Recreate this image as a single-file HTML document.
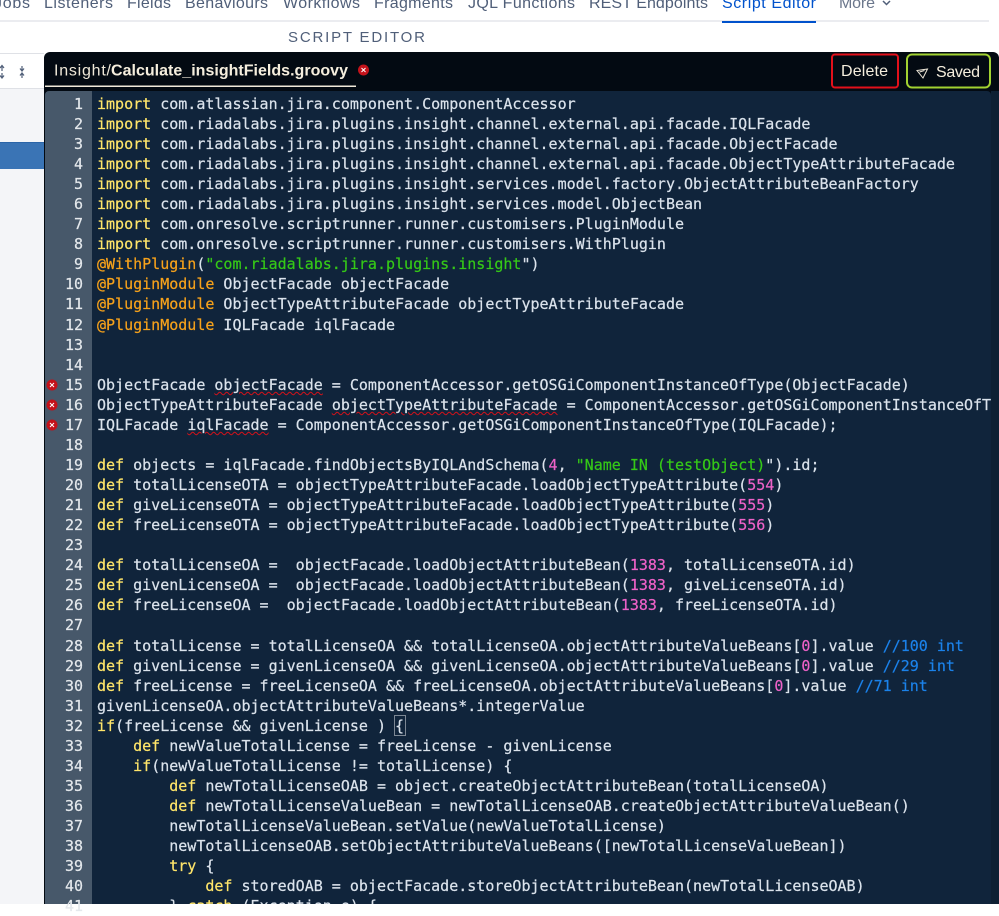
<!DOCTYPE html>
<html><head><meta charset="utf-8"><style>
html,body{margin:0;padding:0;background:#fff}
body{width:999px;height:904px;position:relative;overflow:hidden}
.abs{position:absolute}
#panel{left:44px;top:52px;width:955px;height:852px;background:#030a12;border-radius:6px 6px 0 0}
#code{left:45px;top:91px;width:946px;height:813px;background:#10243b;border-radius:4px 4px 0 0;overflow:hidden}
#strip{left:991px;top:91px;width:8px;height:813px;background:#0e2033}
#gut{left:45px;top:91px;width:47px;height:813px;background:#47586a;border-radius:4px 0 0 0}
#nums{left:45px;top:94.200px;width:38px;text-align:right}
#lines{left:97px;top:94.200px;width:894px;overflow:hidden;height:810px}
#nums div,#lines div{height:20.05px;line-height:20.05px;white-space:pre;font:15px/20.05px "DejaVu Sans Mono","Liberation Mono",monospace;-webkit-text-stroke:.2px currentColor}
#nums div:nth-child(n+8):nth-child(-n+11),#lines div:nth-child(n+8):nth-child(-n+11){position:relative;top:-1px}
#nums div:nth-child(28),#lines div:nth-child(28){position:relative;top:1px}
#nums div{color:#e4e8ec}
#lines div{color:#dbe3ec}
.k{color:#ffe56a}.a{color:#f7a21b}.s{color:#35c917}.n{color:#ee62c8}.c{color:#1b82ea}
.e{text-decoration:underline wavy #d4121a 1px;text-underline-offset:1px}
svg text{font-family:"Liberation Sans",sans-serif}
</style></head><body>
<div class="abs" style="left:0;top:88px;width:44px;height:816px;background:#f4f5f8"></div>
<div class="abs" style="left:0;top:53px;width:44px;height:34px;background:#fff;border-top:1px solid #dfe1e6;border-bottom:1px solid #dfe1e6"></div>
<div class="abs" style="left:0;top:142px;width:44px;height:26px;background:#3a74b5;border-top:1px solid #2b65a8"></div>
<div class="abs" style="left:0;top:20px;width:989px;height:2px;background:#ebecf0"></div>
<div class="abs" style="left:722px;top:21px;width:94px;height:2px;background:#0052cc"></div>
<svg class="abs" style="left:0;top:0" width="999" height="50" xmlns="http://www.w3.org/2000/svg">
<g font-size="16" fill="#505f79">
<text x="-6" y="8" textLength="36" lengthAdjust="spacing">Jobs</text>
<text x="44" y="8" textLength="69" lengthAdjust="spacing">Listeners</text>
<text x="127" y="8" textLength="44" lengthAdjust="spacing">Fields</text>
<text x="185" y="8" textLength="83" lengthAdjust="spacing">Behaviours</text>
<text x="283" y="8" textLength="77" lengthAdjust="spacing">Workflows</text>
<text x="374" y="8" textLength="79" lengthAdjust="spacing">Fragments</text>
<text x="468" y="8" textLength="107" lengthAdjust="spacing">JQL Functions</text>
<text x="589" y="8" textLength="119" lengthAdjust="spacing">REST Endpoints</text>
<text x="722" y="8" textLength="94" lengthAdjust="spacing" fill="#0052cc">Script Editor</text>
<text x="839" y="8" textLength="36" lengthAdjust="spacing" fill="#6b778c">More</text>
</g>
<path d="M883 1l3.500 3.500L890 1" fill="none" stroke="#505f79" stroke-width="1.500"/>
<text x="288" y="42" font-size="15" fill="#505f79" textLength="137" lengthAdjust="spacing">SCRIPT EDITOR</text>
</svg>
<svg class="abs" style="left:0;top:60px" width="30" height="24" xmlns="http://www.w3.org/2000/svg">
<g fill="none" stroke="#505f79" stroke-width="1.200">
<path d="M2 6v5M0 8l2-2.500 2 2.500M2 13v5M0 15.500l2 2.500 2-2.500"/>
<path d="M22 6v5M20 8.500l2 2.500 2-2.500M22 13v5M20 15.500l2-2.500 2 2.500"/>
</g></svg>
<div class="abs" id="panel"></div>
<div class="abs" id="code"></div>
<div class="abs" id="strip"></div>
<div class="abs" id="gut"></div>
<svg class="abs" style="left:44px;top:52px" width="955" height="40" xmlns="http://www.w3.org/2000/svg">
<text x="10" y="23.500" font-size="16" fill="#efe8d8" textLength="57" lengthAdjust="spacing">Insight/</text>
<text x="67" y="23.500" font-size="16" font-weight="700" fill="#f5eedd" textLength="237" lengthAdjust="spacing">Calculate_insightFields.groovy</text>
<rect x="1" y="33.500" width="311" height="1.500" fill="#f0e9da"/>
<circle cx="319.500" cy="18" r="5.500" fill="#c4121a"/>
<path d="M317.500 16l4 4M321.500 16l-4 4" stroke="#fff" stroke-width="1"/>
<rect x="788" y="2.500" width="66" height="33" rx="3" fill="none" stroke="#e3101a" stroke-width="2"/>
<text x="797" y="24" font-size="16" fill="#f5eedd" textLength="47" lengthAdjust="spacing">Delete</text>
<rect x="863" y="2.500" width="83" height="33" rx="5" fill="none" stroke="#a2d231" stroke-width="2"/>
<path d="M873 18.500l10.500-1.500-4.500 9zM875.500 20l5-1.500" fill="none" stroke="#f0e9da" stroke-width="1"/>
<text x="892" y="25" font-size="16" fill="#f5eedd" textLength="44" lengthAdjust="spacing">Saved</text>
</svg>
<div class="abs" id="nums"><div>1</div><div>2</div><div>3</div><div>4</div><div>5</div><div>6</div><div>7</div><div>8</div><div>9</div><div>10</div><div>11</div><div>12</div><div>13</div><div>14</div><div>15</div><div>16</div><div>17</div><div>18</div><div>19</div><div>20</div><div>21</div><div>22</div><div>23</div><div>24</div><div>25</div><div>26</div><div>27</div><div>28</div><div>29</div><div>30</div><div>31</div><div>32</div><div>33</div><div>34</div><div>35</div><div>36</div><div>37</div><div>38</div><div>39</div><div>40</div><div>41</div></div>
<svg class="abs" style="left:46px;top:378px" width="12" height="54" xmlns="http://www.w3.org/2000/svg">
<g fill="#c4121a"><circle cx="6" cy="7" r="5.500"/><circle cx="6" cy="27" r="5.500"/><circle cx="6" cy="47" r="5.500"/></g>
<path d="M4 5l4 4M8 5l-4 4M4 25l4 4M8 25l-4 4M4 45l4 4M8 45l-4 4" stroke="#fff" stroke-width="1"/>
</svg>
<div class="abs" id="lines">
<div><span class="k">import</span> com.atlassian.jira.component.ComponentAccessor</div>
<div><span class="k">import</span> com.riadalabs.jira.plugins.insight.channel.external.api.facade.IQLFacade</div>
<div><span class="k">import</span> com.riadalabs.jira.plugins.insight.channel.external.api.facade.ObjectFacade</div>
<div><span class="k">import</span> com.riadalabs.jira.plugins.insight.channel.external.api.facade.ObjectTypeAttributeFacade</div>
<div><span class="k">import</span> com.riadalabs.jira.plugins.insight.services.model.factory.ObjectAttributeBeanFactory</div>
<div><span class="k">import</span> com.riadalabs.jira.plugins.insight.services.model.ObjectBean</div>
<div><span class="k">import</span> com.onresolve.scriptrunner.runner.customisers.PluginModule</div>
<div><span class="k">import</span> com.onresolve.scriptrunner.runner.customisers.WithPlugin</div>
<div><span class="a">@WithPlugin</span>(<span class="s">"com.riadalabs.jira.plugins.insight</span>")</div>
<div><span class="a">@PluginModule</span> ObjectFacade objectFacade</div>
<div><span class="a">@PluginModule</span> ObjectTypeAttributeFacade objectTypeAttributeFacade</div>
<div><span class="a">@PluginModule</span> IQLFacade iqlFacade</div>
<div> </div>
<div> </div>
<div>ObjectFacade <span class="e">objectFacade</span> = ComponentAccessor.getOSGiComponentInstanceOfType(ObjectFacade)</div>
<div>ObjectTypeAttributeFacade <span class="e">objectTypeAttributeFacade</span> = ComponentAccessor.getOSGiComponentInstanceOfType(ObjectTypeAttributeFacade)</div>
<div>IQLFacade <span class="e">iqlFacade</span> = ComponentAccessor.getOSGiComponentInstanceOfType(IQLFacade);</div>
<div> </div>
<div><span class="k">def</span> objects = iqlFacade.findObjectsByIQLAndSchema(<span class="n">4</span>, <span class="s">"Name IN (testObject)</span>").id;</div>
<div><span class="k">def</span> totalLicenseOTA = objectTypeAttributeFacade.loadObjectTypeAttribute(<span class="n">554</span>)</div>
<div><span class="k">def</span> giveLicenseOTA = objectTypeAttributeFacade.loadObjectTypeAttribute(<span class="n">555</span>)</div>
<div><span class="k">def</span> freeLicenseOTA = objectTypeAttributeFacade.loadObjectTypeAttribute(<span class="n">556</span>)</div>
<div> </div>
<div><span class="k">def</span> totalLicenseOA =  objectFacade.loadObjectAttributeBean(<span class="n">1383</span>, totalLicenseOTA.id)</div>
<div><span class="k">def</span> givenLicenseOA =  objectFacade.loadObjectAttributeBean(<span class="n">1383</span>, giveLicenseOTA.id)</div>
<div><span class="k">def</span> freeLicenseOA =  objectFacade.loadObjectAttributeBean(<span class="n">1383</span>, freeLicenseOTA.id)</div>
<div> </div>
<div><span class="k">def</span> totalLicense = totalLicenseOA &amp;&amp; totalLicenseOA.objectAttributeValueBeans[<span class="n">0</span>].value <span class="c">//100 int</span></div>
<div><span class="k">def</span> givenLicense = givenLicenseOA &amp;&amp; givenLicenseOA.objectAttributeValueBeans[<span class="n">0</span>].value <span class="c">//29 int</span></div>
<div><span class="k">def</span> freeLicense = freeLicenseOA &amp;&amp; freeLicenseOA.objectAttributeValueBeans[<span class="n">0</span>].value <span class="c">//71 int</span></div>
<div>givenLicenseOA.objectAttributeValueBeans*.integerValue</div>
<div><span class="k">if</span>(freeLicense &amp;&amp; givenLicense ) {</div>
<div>    <span class="k">def</span> newValueTotalLicense = freeLicense - givenLicense</div>
<div>    <span class="k">if</span>(newValueTotalLicense != totalLicense) {</div>
<div>        <span class="k">def</span> newTotalLicenseOAB = object.createObjectAttributeBean(totalLicenseOA)</div>
<div>        <span class="k">def</span> newTotalLicenseValueBean = newTotalLicenseOAB.createObjectAttributeValueBean()</div>
<div>        newTotalLicenseValueBean.setValue(newValueTotalLicense)</div>
<div>        newTotalLicenseOAB.setObjectAttributeValueBeans([newTotalLicenseValueBean])</div>
<div>        <span class="k">try</span> {</div>
<div>            <span class="k">def</span> storedOAB = objectFacade.storeObjectAttributeBean(newTotalLicenseOAB)</div>
<div>        } <span class="k">catch</span> (Exception e) {</div>
</div>
<div class="abs" style="left:394px;top:715px;width:10px;height:19px;border:1px solid #7c8794"></div>
</body></html>
